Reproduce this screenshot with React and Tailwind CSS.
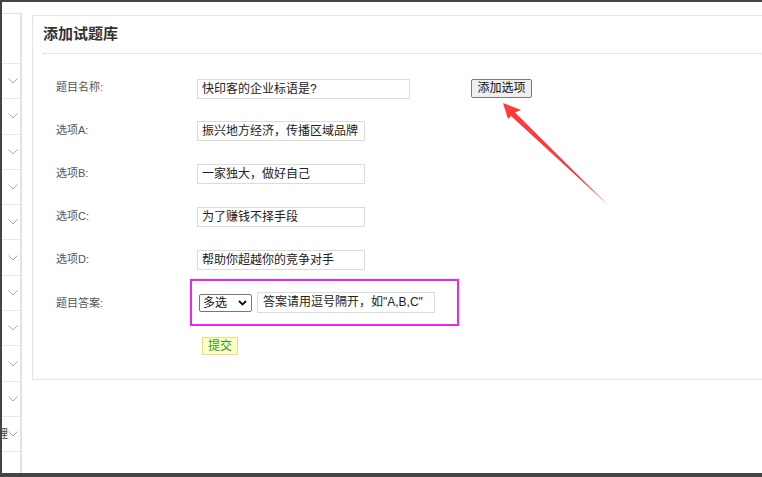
import React from 'react';

const font = "font-['Liberation_Sans','Noto_Sans_CJK_SC',sans-serif]";

const Chevron = () => (
  <svg width="10" height="6" viewBox="0 0 10 6" className="shrink-0">
    <path d="M0.5 0.5 L5 5 L9.5 0.5" fill="none" stroke="#a8a8a8" strokeWidth="1" />
  </svg>
);

const sideRows = ['', '', '', '', '', '', '', '', '', '', '理'];

const options = [
  { label: '选项A:', value: '振兴地方经济，传播区域品牌' },
  { label: '选项B:', value: '一家独大，做好自己' },
  { label: '选项C:', value: '为了赚钱不择手段' },
  { label: '选项D:', value: '帮助你超越你的竞争对手' },
];

const Sidebar = () => (
  <div className="w-[20px] shrink-0 flex flex-col">
    <div className="h-[11px]"></div>
    <div className="flex-1 flex flex-col border-t border-r-2 border-[#e3e3e3] overflow-hidden">
      <div className="h-[50px] shrink-0 border-b border-[#e8e8e8]"></div>
      {sideRows.map((t, i) => (
        <div key={i} className="h-[35.3px] shrink-0 border-b border-[#e8e8e8] flex items-center justify-end pr-[2px]">
          {t && <span className="text-[11px] leading-none text-[#444] whitespace-nowrap -ml-[4px]">{t}</span>}
          <Chevron />
        </div>
      ))}
    </div>
  </div>
);

const TextBox = ({ w, children }) => (
  <div className={`${w} h-[20px] shrink-0 border border-[#dcdcdc] bg-white px-[4px] text-[12px] leading-[18px] text-[#222] whitespace-nowrap overflow-hidden`}>
    {children}
  </div>
);

export default function App() {
  return (
    <div className={`relative w-[762px] h-[477px] bg-white overflow-hidden flex flex-col ${font}`}>
      <div className="h-[2px] bg-[#444] shrink-0"></div>
      <div className="flex-1 flex min-h-0">
        <div className="w-[2px] bg-[#444] shrink-0"></div>
        <Sidebar />
        <div className="flex-1 pl-[10px] pt-[13px] min-w-0">
          <div className="w-[740px] h-[365px] border border-[#e4e4e4] bg-white">
            <div className="mx-[10px] pt-[8px] pb-[9px] border-b border-dotted border-[#cfcfcf]">
              <h2 className="text-[15px] leading-[20px] font-bold text-[#333]">添加试题库</h2>
            </div>

            <div className="pl-[23px] pt-[25px]">
              <div className="flex items-start h-[20px] mb-[22px]">
                <div className="w-[141px] shrink-0 pt-[1px] text-[11px] leading-[14px] text-[#555]">题目名称:</div>
                <TextBox w="w-[213px]">快印客的企业标语是?</TextBox>
                <button className="ml-[61px] w-[61px] h-[19px] border border-[#7a7a7a] rounded-[2px] bg-[#efefef] text-[12px] leading-[17px] text-[#111]">
                  添加选项
                </button>
              </div>

              {options.map((o) => (
                <div key={o.label} className="flex items-start h-[20px] mb-[23px]">
                  <div className="w-[141px] shrink-0 pt-[2px] text-[11px] leading-[14px] text-[#555]">{o.label}</div>
                  <TextBox w="w-[168px]">{o.value}</TextBox>
                </div>
              ))}

              <div className="flex items-center -mt-[14px]">
                <div className="w-[134px] shrink-0 text-[11px] leading-[14px] text-[#555]">题目答案:</div>
                <div className="flex items-center border-2 border-[#f023f0] pl-[7px] pr-[22px] py-[11px]">
                  <div className="w-[53px] h-[18px] border border-[#767676] rounded-[2px] bg-white flex items-center justify-between pl-[3px] pr-[4px] text-[12px] text-[#111]">
                    <span className="leading-none">多选</span>
                    <svg width="9" height="6" viewBox="0 0 9 6">
                      <path d="M1 1 L4.5 4.5 L8 1" fill="none" stroke="#111" strokeWidth="1.8" />
                    </svg>
                  </div>
                  <div className="ml-[5px] w-[178px] h-[21px] border border-[#dcdcdc] bg-white px-[5px] text-[12px] leading-[19px] text-[#222] whitespace-nowrap">
                    答案请用逗号隔开，如"A,B,C"
                  </div>
                </div>
              </div>

              <div className="pl-[146px] pt-[7px]">
                <button className="w-[36px] h-[18px] bg-[#ffffc4] border border-[#f2d590] text-[12px] leading-[16px] text-[#2f9a2f]">
                  提交
                </button>
              </div>
            </div>
          </div>
        </div>
      </div>
      <div className="h-[4px] bg-[#444] shrink-0"></div>

      <svg className="absolute inset-0 pointer-events-none" width="762" height="477" viewBox="0 0 762 477">
        <polygon points="503,103 521,110 515,112.5 608,205 511,116 508,119" fill="#ff3a3a" />
      </svg>
    </div>
  );
}
